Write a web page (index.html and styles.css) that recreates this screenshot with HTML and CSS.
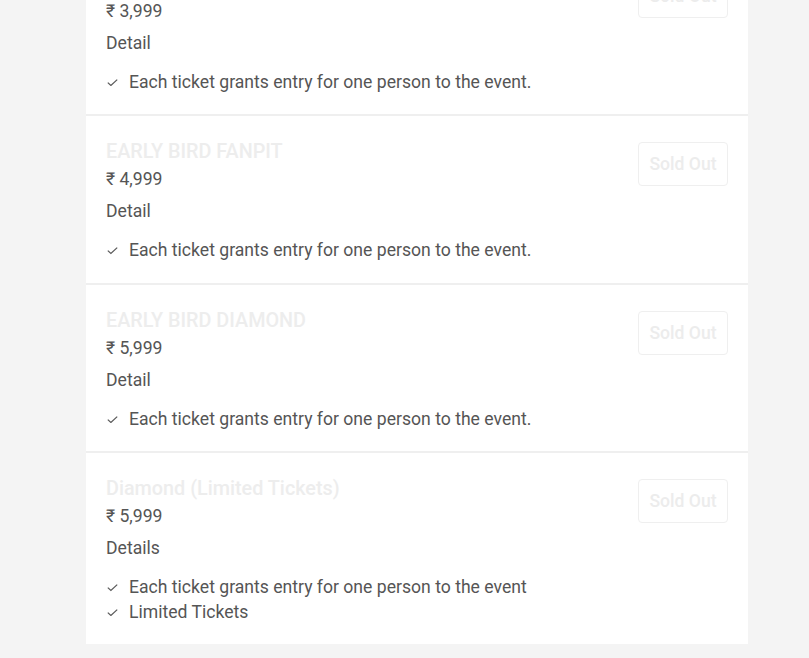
FILE: index.html
```html
<!DOCTYPE html>
<html>
<head>
<meta charset="utf-8">
<link rel="stylesheet" href="styles.css">
</head>
<body>
<div class="list">
  <div class="ticket">
    <div class="info">
      <div class="title">EARLY BIRD GOLD</div>
      <div class="price">₹ 3,999</div>
      <div class="detail">Detail</div>
      <ul class="perks">
        <li><svg class="check" viewBox="0 0 10 7"><polyline points="0.6,3.4 3.5,6 9.4,0.6"/></svg>Each ticket grants entry for one person to the event.</li>
      </ul>
    </div>
    <button class="sold">Sold Out</button>
  </div>
  <div class="ticket">
    <div class="info">
      <div class="title">EARLY BIRD FANPIT</div>
      <div class="price">₹ 4,999</div>
      <div class="detail">Detail</div>
      <ul class="perks">
        <li><svg class="check" viewBox="0 0 10 7"><polyline points="0.6,3.4 3.5,6 9.4,0.6"/></svg>Each ticket grants entry for one person to the event.</li>
      </ul>
    </div>
    <button class="sold">Sold Out</button>
  </div>
  <div class="ticket">
    <div class="info">
      <div class="title">EARLY BIRD DIAMOND</div>
      <div class="price">₹ 5,999</div>
      <div class="detail">Detail</div>
      <ul class="perks">
        <li><svg class="check" viewBox="0 0 10 7"><polyline points="0.6,3.4 3.5,6 9.4,0.6"/></svg>Each ticket grants entry for one person to the event.</li>
      </ul>
    </div>
    <button class="sold">Sold Out</button>
  </div>
  <div class="ticket">
    <div class="info">
      <div class="title">Diamond (Limited Tickets)</div>
      <div class="price">₹ 5,999</div>
      <div class="detail">Details</div>
      <ul class="perks">
        <li><svg class="check" viewBox="0 0 10 7"><polyline points="0.6,3.4 3.5,6 9.4,0.6"/></svg>Each ticket grants entry for one person to the event</li>
        <li><svg class="check" viewBox="0 0 10 7"><polyline points="0.6,3.4 3.5,6 9.4,0.6"/></svg>Limited Tickets</li>
      </ul>
    </div>
    <button class="sold">Sold Out</button>
  </div>
</div>
</body>
</html>
```
FILE: styles.css
```css
html, body {
  margin: 0;
  padding: 0;
  background: #f4f4f4;
  font-family: Roboto, "Liberation Sans", sans-serif;
  color: #555;
}
.list {
  width: 662px;
  margin-left: 86px;
  margin-top: -52px;
  background: #fff;
}
.ticket {
  display: flex;
  justify-content: space-between;
  align-items: flex-start;
  padding: 24px 20px 20px 20px;
  border-bottom: 2px solid #efefef;
}
.ticket:last-child {
  border-bottom: none;
}
.title {
  font-size: 19.8px;
  font-weight: 500;
  line-height: 24px;
  color: #ededed;
}
.price {
  font-size: 17.6px;
  line-height: 24px;
  margin-top: 3px;
}
.detail {
  font-size: 17.6px;
  line-height: 24px;
  margin-top: 8px;
}
.perks {
  list-style: none;
  margin: 15px 0 0 0;
  padding: 0;
  font-size: 17.6px;
  line-height: 24.4px;
}
.perks li {
  display: flex;
  align-items: center;
}
.check {
  width: 11px;
  height: 7.5px;
  margin: 1px 11px 0 1px;
  fill: none;
  stroke: #5a5a5a;
  stroke-width: 1.2;
}
.sold {
  margin-top: 2px;
  width: 90px;
  height: 44px;
  background: #fff;
  border: 1px solid #efefef;
  border-radius: 4px;
  color: #ececec;
  font-family: Roboto, "Liberation Sans", sans-serif;
  font-size: 17.6px;
  font-weight: 500;
  padding: 0;
}
```
